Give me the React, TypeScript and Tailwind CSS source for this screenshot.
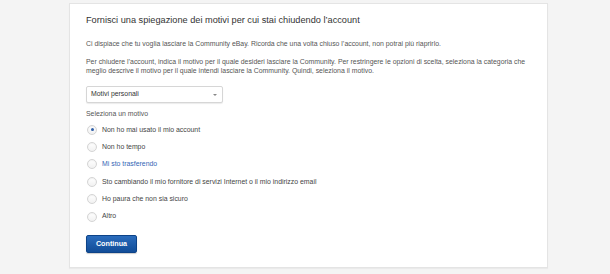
import React, { useState } from 'react';

const reasons = [
  'Non ho mai usato il mio account',
  'Non ho tempo',
  'Mi sto trasferendo',
  'Sto cambiando il mio fornitore di servizi Internet o il mio indirizzo email',
  'Ho paura che non sia sicuro',
  'Altro',
];

const Radio = ({ checked }: { checked: boolean }) => (
  <span className="flex h-[10px] w-[10px] shrink-0 items-center justify-center rounded-full border border-[#d4d4d4] bg-gradient-to-b from-white to-[#f1f1f1] shadow-[inset_0_1px_1px_rgba(0,0,0,0.05)]">
    {checked && <span className="h-[3px] w-[3px] rounded-full bg-[#2f5fa8]" />}
  </span>
);

export default function App() {
  const [selected, setSelected] = useState(0);

  return (
    <div className="h-[274px] w-[610px] bg-[#f4f4f4] pt-[3px] font-['Liberation_Sans',Arial,sans-serif]">
      <div className="ml-[69px] h-[265px] w-[479px] border border-[#e4e4e4] bg-white px-[16px] pt-[10px] shadow-[0_1px_1px_rgba(0,0,0,0.04)]">
        <h1 className="text-[9.2px] leading-[12px] text-[#333]">
          Fornisci una spiegazione dei motivi per cui stai chiudendo l’account
        </h1>

        <p className="mt-[13px] text-[6.9px] leading-[9px] text-[#555]">
          Ci dispiace che tu voglia lasciare la Community eBay. Ricorda che una volta chiuso l’account, non potrai più riaprirlo.
        </p>

        <p className="mt-[9px] whitespace-nowrap text-[6.9px] leading-[9px] text-[#555]">
          Per chiudere l’account, indica il motivo per il quale desideri lasciare la Community. Per restringere le opzioni di scelta, seleziona la categoria che
          <br />
          meglio descrive il motivo per il quale intendi lasciare la Community. Quindi, seleziona il motivo.
        </p>

        <div className="mt-[11px] flex h-[17px] w-[137px] items-center justify-between rounded-[2px] border border-[#d6d6d6] bg-white pl-[4px] pr-[5px] shadow-[0_1px_1px_rgba(0,0,0,0.08)]">
          <span className="text-[6.9px] text-[#333]">Motivi personali</span>
          <span className="h-0 w-0 border-x-[2px] border-t-[2.5px] border-x-transparent border-t-[#888]" />
        </div>

        <div className="mt-[6px] text-[6.9px] leading-[9px] text-[#555]">Seleziona un motivo</div>

        <div className="mt-[3px] flex flex-col">
          {reasons.map((r, i) => (
            <label
              key={r}
              onClick={() => setSelected(i)}
              className="flex h-[17.4px] cursor-pointer items-center gap-[5px] pl-[1px]"
            >
              <Radio checked={selected === i} />
              <span className={`text-[6.9px] ${i === 2 ? 'text-[#3465b5]' : 'text-[#444]'}`}>{r}</span>
            </label>
          ))}
        </div>

        <button className="mt-[10px] h-[18px] w-[51px] rounded-[2px] border border-[#0d4388] bg-gradient-to-b from-[#2a6cbc] to-[#114d98] text-[7.2px] font-bold text-white shadow-[0_1px_1px_rgba(0,0,0,0.2)]">
          Continua
        </button>
      </div>
    </div>
  );
}
